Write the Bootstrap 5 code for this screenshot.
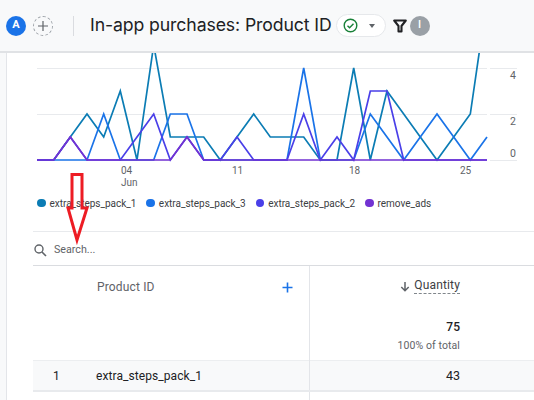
<!DOCTYPE html>
<html lang="en"><head><meta charset="utf-8"><title>In-app purchases</title>
<link href="https://cdn.jsdelivr.net/npm/bootstrap@5.3.0/dist/css/bootstrap.min.css" rel="stylesheet">
<style>
html,body{height:400px;overflow:hidden}
body{font-family:Roboto,"Liberation Sans",sans-serif;background:#fff;color:#202124;position:relative}
.topbar{height:53px;background:#f8f9fa;border-bottom:2px solid #e0e2e5;padding-left:6px}
.avatar{width:20px;height:20px;background:#1a73e8;color:#fff;font-size:11px;font-weight:700}
.addseg{width:20px;height:20px;border:1px dashed #9aa0a6;margin-left:7px}
.vsep{width:1px;height:20px;background:#dadce0;margin:0 16px 0 20px}
.ttl{font-family:Inter,"Open Sans",sans-serif;font-size:17.65px;letter-spacing:-.1px;color:#202124;white-space:nowrap}
.chip{width:50px;height:23px;border:1px solid #e6e8eb;background:#fff;margin-left:4px;padding-left:6px}
.caret{width:0;height:0;border-left:3.5px solid transparent;border-right:3.5px solid transparent;border-top:4px solid #5f6368;margin-left:11px}
.funnel{margin-left:7px;flex:none}
.infodot{width:20px;height:20px;background:#9aa0a6;color:#fff;font-size:11px;font-weight:500;margin-left:3px}
.shell{height:347px}
.gutter{width:7px;background:#f8f9fa;border-right:1px solid #e3e5e9;flex:none}
.pane{flex:1;min-width:0;overflow:hidden}
.plot{display:block;width:527px;height:136px}
.plot text{font-family:Roboto,sans-serif;font-size:10.5px;fill:#5f6368}
.plot .xlab{font-size:10px}
.legendrow{height:42px;padding:0 0 14px 30px;font-size:10px;color:#3c4043;gap:10px;letter-spacing:-.02px}
.dot{width:8.5px;height:8.5px;margin-right:4px;flex:none}
.seekrow{margin-left:26px;height:30px;padding-top:3px;border-top:1px solid #e8eaed;border-bottom:1px solid #dadce0;font-size:10.7px;color:#5f6368;gap:7px;box-sizing:content-box}
.datatbl{margin:0 0 0 26px;width:501px;table-layout:fixed;font-size:12px;color:#202124;border-collapse:collapse}
.datatbl td,.datatbl th{padding:0;border:0;font-weight:400}
.c1{width:63px}.c2{width:213px}
.hd{height:94px;vertical-align:top}
.hdname{color:#5f6368;padding-top:12px!important;padding-left:1px!important;font-size:12px;letter-spacing:.15px}
.vline{border-right:1px solid #e3e5e9!important}
.qty{padding:12px 74px 0 0!important;text-align:right;vertical-align:top}
.qlabel{color:#3c4043;letter-spacing:.15px;border-bottom:1px dashed #80868b;line-height:15px}
.tot{font-weight:500;font-size:12px;margin-top:26px;line-height:14px}
.pct{font-size:10.5px;color:#5f6368;margin-top:6px;line-height:12px;letter-spacing:.1px}
.rowa td{height:31px;padding-top:2px;background:#f8f9fa;border-top:1px solid #eceef0;border-bottom:2px solid #e8eaed;vertical-align:middle}
.numcell{padding-left:20px!important}
.namecell{font-weight:500;letter-spacing:.08px}
.valcell{padding-right:74px!important;text-align:right;font-size:12.5px}
.rowb td{height:20px}
.redarrow{position:absolute;left:60px;top:168px;width:36px;height:78px;pointer-events:none}
</style></head>
<body>
<header class="topbar d-flex align-items-center">
  <div class="avatar rounded-circle d-flex align-items-center justify-content-center">A</div>
  <div class="addseg rounded-circle d-flex align-items-center justify-content-center">
    <svg width="12" height="12" viewBox="0 0 12 12"><path d="M6 1v10M1 6h10" stroke="#5f6368" stroke-width="1.2" fill="none"/></svg>
  </div>
  <div class="vsep"></div>
  <div class="ttl">In-app purchases: Product ID</div>
  <div class="chip rounded-pill d-flex align-items-center">
    <svg width="15" height="15" viewBox="0 0 15 15"><circle cx="7.5" cy="7.5" r="6.3" fill="none" stroke="#188038" stroke-width="1.4"/><path d="M4.5 7.7l2.1 2.1 3.9-4" fill="none" stroke="#188038" stroke-width="1.4"/></svg>
    <span class="caret"></span>
  </div>
  <svg class="funnel" width="14" height="14" viewBox="0 0 14 14"><path d="M1.2 1.5h11.6L8.5 7v5.5h-3V7z" fill="none" stroke="#202124" stroke-width="2.1" stroke-linejoin="round"/></svg>
  <div class="infodot rounded-circle d-flex align-items-center justify-content-center">I</div>
</header>
<div class="shell d-flex">
  <div class="gutter"></div>
  <main class="pane">
    <svg class="plot" viewBox="7 53 527 136">
      <g stroke="#e8eaed" stroke-width="1">
        <path d="M37 68.5H487M37 114.5H487M490 68.5H517M490 114.5H517M490 160.5H517"/>
      </g>
      <g fill="none" stroke-width="1.7" stroke-linejoin="miter">
        <polyline id="s1" stroke="#0b7cb4" points=""/>
        <polyline id="s2" stroke="#1a73e8" points=""/>
        <polyline id="s3" stroke="#4a3fe8" points=""/>
        <polyline id="s4" stroke="#7232d2" points=""/>
      </g>
      <text class="xlab" x="121" y="173.8">04</text>
      <text class="xlab" x="121" y="185.6">Jun</text>
      <text class="xlab" x="232" y="173.8">11</text>
      <text class="xlab" x="349" y="173.8">18</text>
      <text class="xlab" x="460" y="173.8">25</text>
      <text x="510" y="79">4</text>
      <text x="510" y="125">2</text>
      <text x="510" y="157">0</text>
    </svg>
    <div class="legendrow d-flex align-items-center">
      <span class="d-flex align-items-center"><span class="dot rounded-circle" style="background:#0b7cb4"></span>extra_steps_pack_1</span>
      <span class="d-flex align-items-center"><span class="dot rounded-circle" style="background:#1a73e8"></span>extra_steps_pack_3</span>
      <span class="d-flex align-items-center"><span class="dot rounded-circle" style="background:#4a3fe8"></span>extra_steps_pack_2</span>
      <span class="d-flex align-items-center"><span class="dot rounded-circle" style="background:#7232d2"></span>remove_ads</span>
    </div>
    <div class="seekrow d-flex align-items-center">
      <svg width="14" height="14" viewBox="0 0 14 14"><circle cx="6" cy="6" r="4" fill="none" stroke="#5f6368" stroke-width="1.4"/><path d="M9 9l4 4" stroke="#5f6368" stroke-width="1.6"/></svg>
      <span>Search...</span>
    </div>
    <table class="table datatbl">
      <colgroup><col class="c1"><col class="c2"><col></colgroup>
      <tbody>
      <tr class="hd">
        <td></td>
        <td class="hdname vline"><div class="d-flex justify-content-between align-items-center pe-3"><span>Product ID</span><svg width="11" height="11" viewBox="0 0 11 11"><path d="M5.5 .5v10M.5 5.5h10" stroke="#1a73e8" stroke-width="1.6"/></svg></div></td>
        <td class="qty"><div class="d-flex justify-content-end align-items-center gap-1"><svg width="10" height="11" viewBox="0 0 10 11"><path d="M5 1v8.5M1.3 6l3.7 3.7L8.7 6" fill="none" stroke="#5f6368" stroke-width="1.5"/></svg><span class="qlabel">Quantity</span></div><div class="tot">75</div><div class="pct">100% of total</div></td>
      </tr>
      <tr class="rowa">
        <td class="numcell">1</td>
        <td class="namecell vline">extra_steps_pack_1</td>
        <td class="valcell">43</td>
      </tr>
      <tr class="rowb"><td></td><td class="vline"></td><td></td></tr>
      </tbody>
    </table>
  </main>
</div>
<svg class="redarrow" viewBox="60 168 36 78"><path d="M72 174.5h10v33.5h5L77 240 68 208h4z" fill="none" stroke="#ed1c24" stroke-width="3"/></svg>
<script src="https://cdn.jsdelivr.net/npm/bootstrap@5.3.0/dist/js/bootstrap.bundle.min.js"></script>
<script>
const d={s1:[0,0,1,2,1,3,0,5,1,1,1,0,1,2,1,1,1,0,0,4,0,3,2,1,0,1,2,7],
s2:[0,0,0,0,2,0,0,0,2,2,0,0,0,0,0,0,4,0,0,0,2,1,0,1,2,1,0,1],
s3:[0,0,1,0,0,0,1,2,0,1,0,0,1,0,0,0,2,0,1,0,3,3,0,0,0,0,0,0],
s4:[0,0,1,0,0,0,0,0,0,1,0,0,0,0,0,0,0,0,0,0,0,0,0,0,0,0,0,0]};
for(const k in d){document.getElementById(k).setAttribute('points',d[k].map((v,i)=>(37+16.667*i).toFixed(1)+','+(160-23*v)).join(' '))}
</script>
</body></html>
